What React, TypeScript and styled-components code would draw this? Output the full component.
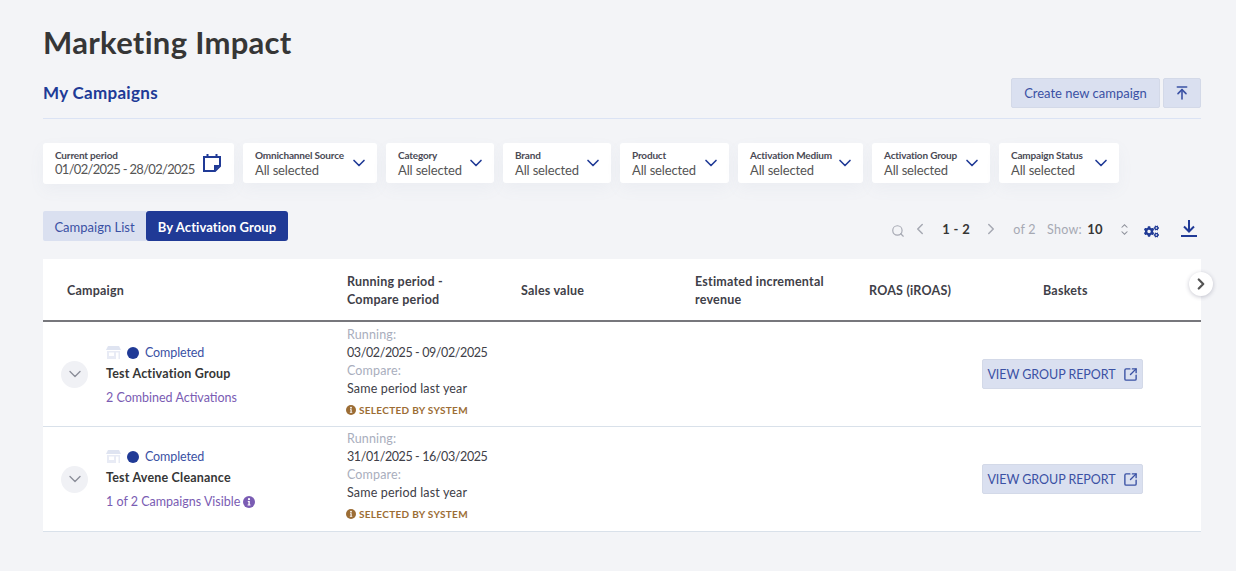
import React from "react";
import styled, { createGlobalStyle } from "styled-components";
import {
  ArrowUpToLine,
  ChevronDown,
  ChevronLeft,
  ChevronRight,
  Search,
  SquareArrowOutUpRight,
} from "lucide-react";
import { FaCogs } from "react-icons/fa";

const Global = createGlobalStyle`
  html, body {
    margin: 0;
    background: #f3f4f7;
    font-family: "Lato", "Open Sans", sans-serif;
    color: #363636;
  }
  * { box-sizing: border-box; }
`;

const Page = styled.div`
  width: 1236px;
  height: 571px;
  padding: 25px 35px 0 43px;
  overflow: hidden;
`;

const Title = styled.h1`
  margin: 0;
  font-size: 31px;
  line-height: 34px;
  font-weight: 700;
  letter-spacing: 0.3px;
  color: #363636;
`;

const SectionBar = styled.div`
  height: 60px;
  padding-top: 19px;
  display: flex;
  justify-content: space-between;
  align-items: flex-start;
  border-bottom: 1px solid #dbe3f4;
`;

const SectionTitle = styled.h2`
  margin: 5px 0 0;
  font-size: 17px;
  line-height: 20px;
  font-weight: 700;
  letter-spacing: 0.3px;
  color: #203a96;
`;

const Actions = styled.div`
  display: flex;
  gap: 3px;
`;

const SoftButton = styled.button<{ $square?: boolean }>`
  height: 30px;
  width: ${(p) => (p.$square ? "38px" : "149px")};
  padding: 0;
  display: flex;
  align-items: center;
  justify-content: center;
  background: #dae0f0;
  border: 1px solid #d3d9e8;
  border-radius: 2px;
  font: inherit;
  font-size: 13px;
  color: #3a51a4;
`;

const Filters = styled.div`
  margin-top: 24px;
  display: flex;
  gap: 9px;
  align-items: flex-start;
`;

const FilterBox = styled.div`
  width: ${(p: { $w: number; $period?: boolean }) => p.$w}px;
  height: ${(p) => (p.$period ? 41 : 40)}px;
  padding: ${(p) => (p.$period ? "4px 12px 6px" : "5px 12px")};
  display: flex;
  align-items: center;
  justify-content: space-between;
  background: #fff;
  border-radius: 3px;
  box-shadow: 0 6px 16px rgba(120, 130, 170, 0.06);
`;

const FilterText = styled.div`
  display: flex;
  flex-direction: column;
  white-space: nowrap;
`;

const FilterLabel = styled.span`
  font-size: 10px;
  line-height: 13px;
  font-weight: 700;
  letter-spacing: -0.18px;
  color: #4a4a55;
`;

const FilterValue = styled.span`
  margin-top: 1px;
  font-size: 13px;
  line-height: 15px;
  letter-spacing: -0.15px;
  color: #555;
`;

const PeriodValue = styled(FilterValue)`
  margin-top: 0;
  letter-spacing: -0.7px;
`;

const Caret = styled(ChevronDown)`
  flex: none;
  width: 20px;
  height: 20px;
  margin-right: -4px;
  color: #203a96;
`;

const ToolRow = styled.div`
  margin-top: 27px;
  height: 30px;
  display: flex;
  justify-content: space-between;
  align-items: center;
`;

const Tabs = styled.div`
  display: flex;
`;

const Tab = styled.div<{ $active?: boolean }>`
  height: 30px;
  padding-top: 1px;
  width: ${(p) => (p.$active ? "142px" : "103px")};
  display: flex;
  align-items: center;
  justify-content: center;
  border-radius: ${(p) => (p.$active ? "3px" : "2px 0 0 2px")};
  font-size: 13px;
  letter-spacing: ${(p) => (p.$active ? "0.1px" : "0")};
  font-weight: ${(p) => (p.$active ? 700 : 400)};
  background: ${(p) => (p.$active ? "#203a96" : "#dae0f0")};
  color: ${(p) => (p.$active ? "#fff" : "#3a51a4")};
`;

const Pager = styled.div`
  display: flex;
  align-items: center;
  height: 30px;
  padding-top: 6px;
  margin-right: 4px;
  font-size: 12.5px;
  letter-spacing: 0.3px;
  color: #a6a9b3;
`;

const PagerBold = styled.span<{ $w: number; $ml: number }>`
  width: ${(p) => p.$w}px;
  margin-left: ${(p) => p.$ml}px;
  text-align: center;
  font-size: 13px;
  font-weight: 700;
  color: #363636;
`;

const PagerText = styled.span<{ $ml: number }>`
  margin-left: ${(p) => p.$ml}px;
`;

const Table = styled.div`
  position: relative;
  margin-top: 18px;
  width: 1158px;
`;

const HeadRow = styled.div`
  height: 63px;
  padding-top: 2px;
  display: grid;
  grid-template-columns: 304px repeat(4, 174px) 1fr;
  align-items: center;
  background: #fff;
  border-bottom: 2px solid #77777c;
  font-size: 12.5px;
  line-height: 18px;
  font-weight: 700;
  letter-spacing: 0.22px;
  color: #404048;
`;

const HeadCell = styled.div<{ $first?: boolean }>`
  padding-left: ${(p) => (p.$first ? "24px" : "0")};
  padding-right: 20px;
`;

const ScrollButton = styled.div`
  position: absolute;
  top: 13px;
  right: -12px;
  width: 24px;
  height: 24px;
  display: flex;
  align-items: center;
  justify-content: center;
  background: #fff;
  border-radius: 50%;
  color: #555;
  box-shadow: 0 1px 4px rgba(70, 70, 100, 0.3);
`;

const CampaignCell = styled.div`
  display: flex;
  align-items: center;
  padding-left: 18px;
  gap: 18px;
`;

const Expand = styled.div`
  width: 27px;
  height: 27px;
  flex: none;
  display: flex;
  align-items: center;
  justify-content: center;
  background: #f0f1f5;
  border-radius: 50%;
  color: #8b8e99;
`;

const CampaignInfo = styled.div`
  display: flex;
  flex-direction: column;
  padding-top: 2px;
`;

const StatusLine = styled.div`
  display: flex;
  align-items: center;
  height: 20px;
  font-size: 12.5px;
  letter-spacing: -0.1px;
  color: #3a51a4;
`;

const StatusDot = styled.span`
  width: 12px;
  height: 12px;
  margin: 0 6px 0 6px;
  background: #203a96;
  border-radius: 50%;
`;

const CampaignName = styled.div`
  margin-top: 1px;
  font-size: 12.5px;
  line-height: 20px;
  font-weight: 700;
  letter-spacing: 0.2px;
  color: #363636;
`;

const CampaignMeta = styled.div`
  margin-top: 4px;
  display: flex;
  align-items: center;
  gap: 3px;
  font-size: 12.5px;
  line-height: 20px;
  color: #7a5cb3;
`;

const PeriodCell = styled.div`
  margin-top: -3px;
  font-size: 12.5px;
  line-height: 18px;
  letter-spacing: 0.15px;
  white-space: nowrap;
  color: #404048;
`;

const PeriodLabel = styled.div`
  color: #a9aebd;
`;

const PeriodDates = styled.div`
  letter-spacing: -0.4px;
`;

const SystemNote = styled.div`
  margin-top: 3px;
  margin-left: -1px;
  display: flex;
  align-items: center;
  gap: 3px;
  font-size: 10px;
  font-weight: 700;
  letter-spacing: 0.3px;
  color: #9c6d35;
`;

const Row = styled.div`
  height: 105px;
  display: grid;
  grid-template-columns: 304px 174px 1fr;
  align-items: center;
  background: #fff;
  border-bottom: 1px solid #d9e1ea;

  & + & ${CampaignInfo} {
    margin-bottom: 2px;
  }
  & + & ${PeriodCell} {
    margin-bottom: 2px;
  }
`;

const ReportCell = styled.div`
  display: flex;
  justify-content: flex-end;
  padding-right: 58px;
`;

const ReportButton = styled.button`
  width: 161px;
  height: 30px;
  display: flex;
  align-items: center;
  justify-content: center;
  gap: 7px;
  padding: 0;
  background: #dae0f0;
  border: 1px solid #d3d9e8;
  border-radius: 2px;
  font: inherit;
  font-size: 12.5px;
  letter-spacing: -0.05px;
  color: #3a51a4;
  white-space: nowrap;
`;

const filters = [
  { label: "Omnichannel Source", w: 134 },
  { label: "Category", w: 108 },
  { label: "Brand", w: 108 },
  { label: "Product", w: 109 },
  { label: "Activation Medium", w: 125 },
  { label: "Activation Group", w: 118 },
  { label: "Campaign Status", w: 120 },
];

const rows = [
  {
    name: "Test Activation Group",
    meta: "2 Combined Activations",
    running: "03/02/2025 - 09/02/2025",
    info: false,
  },
  {
    name: "Test Avene Cleanance",
    meta: "1 of 2 Campaigns Visible",
    running: "31/01/2025 - 16/03/2025",
    info: true,
  },
];

function CalendarIcon() {
  return (
    <svg width="20" height="20" viewBox="0 0 20 20" fill="none" style={{ flex: "none" }}>
      <path d="M2 4h16v9l-5 5H2z" stroke="#203a96" strokeWidth="2" />
      <path d="M5.5 1v3M14.5 1v3" stroke="#203a96" strokeWidth="2" />
      <path d="M12 18v-6h6z" fill="#203a96" />
    </svg>
  );
}

function StoreIcon() {
  return (
    <svg width="15" height="13" viewBox="0 0 15 13">
      <path d="M2 0h11l2 4H0z" fill="#dfe4f1" />
      <path d="M1 5h13v8H1z" fill="#e8ebf5" />
      <path d="M3 6.5h5v3.5H3z" fill="#fff" />
      <path d="M10 6.5h2.5V13H10z" fill="#fff" />
    </svg>
  );
}

function InfoDot({ color, size }: { color: string; size: number }) {
  return (
    <svg width={size} height={size} viewBox="0 0 12 12" style={{ flex: "none" }}>
      <circle cx="6" cy="6" r="6" fill={color} />
      <circle cx="6" cy="3.2" r="1.1" fill="#fff" />
      <path d="M4.8 5h2v3.4h.7v1H4.6v-1h.8V6h-.6z" fill="#fff" />
    </svg>
  );
}

function SortIcon() {
  return (
    <svg width="7" height="11" viewBox="0 0 7 11" style={{ marginLeft: 18 }}>
      <path d="M3.5 0L7 3.5H5.6L3.5 1.6 1.4 3.5H0z" fill="#8f929c" />
      <path d="M3.5 11L0 7.5h1.4l2.1 1.9 2.1-1.9H7z" fill="#8f929c" />
    </svg>
  );
}

function DownloadIcon() {
  return (
    <svg width="16" height="17" viewBox="0 0 16 17" fill="none" style={{ marginLeft: 22, marginTop: -1 }}>
      <path d="M8 0v11M3 6.5l5 5 5-5" stroke="#203a96" strokeWidth="2" />
      <path d="M0 16h16" stroke="#203a96" strokeWidth="2" />
    </svg>
  );
}

export default function App() {
  return (
    <Page>
      <Global />
      <Title>Marketing Impact</Title>
      <SectionBar>
        <SectionTitle>My Campaigns</SectionTitle>
        <Actions>
          <SoftButton>Create new campaign</SoftButton>
          <SoftButton $square>
            <ArrowUpToLine size={16} strokeWidth={2.4} />
          </SoftButton>
        </Actions>
      </SectionBar>

      <Filters>
        <FilterBox $w={191} $period>
          <FilterText>
            <FilterLabel>Current period</FilterLabel>
            <PeriodValue>01/02/2025 - 28/02/2025</PeriodValue>
          </FilterText>
          <CalendarIcon />
        </FilterBox>
        {filters.map((f) => (
          <FilterBox key={f.label} $w={f.w}>
            <FilterText>
              <FilterLabel>{f.label}</FilterLabel>
              <FilterValue>All selected</FilterValue>
            </FilterText>
            <Caret />
          </FilterBox>
        ))}
      </Filters>

      <ToolRow>
        <Tabs>
          <Tab>Campaign List</Tab>
          <Tab $active>By Activation Group</Tab>
        </Tabs>
        <Pager>
          <Search size={14} style={{ marginTop: 4 }} />
          <ChevronLeft size={18} style={{ marginLeft: 6 }} />
          <PagerBold $w={30} $ml={12}>
            1 - 2
          </PagerBold>
          <ChevronRight size={18} style={{ marginLeft: 11 }} />
          <PagerText $ml={13}>of 2</PagerText>
          <PagerText $ml={11}>Show:</PagerText>
          <PagerBold $w={16} $ml={5}>
            10
          </PagerBold>
          <SortIcon />
          <FaCogs size={15} color="#203a96" style={{ marginLeft: 16, marginTop: 4 }} />
          <DownloadIcon />
        </Pager>
      </ToolRow>

      <Table>
        <HeadRow>
          <HeadCell $first>Campaign</HeadCell>
          <HeadCell>
            Running period -<br />
            Compare period
          </HeadCell>
          <HeadCell>Sales value</HeadCell>
          <HeadCell>Estimated incremental revenue</HeadCell>
          <HeadCell>ROAS (iROAS)</HeadCell>
          <HeadCell>Baskets</HeadCell>
        </HeadRow>
        <ScrollButton>
          <ChevronRight size={18} strokeWidth={3} />
        </ScrollButton>
        {rows.map((r) => (
          <Row key={r.name}>
            <CampaignCell>
              <Expand>
                <ChevronDown size={20} strokeWidth={1.6} />
              </Expand>
              <CampaignInfo>
                <StatusLine>
                  <StoreIcon />
                  <StatusDot />
                  Completed
                </StatusLine>
                <CampaignName>{r.name}</CampaignName>
                <CampaignMeta>
                  {r.meta}
                  {r.info && <InfoDot color="#7a5cb3" size={12} />}
                </CampaignMeta>
              </CampaignInfo>
            </CampaignCell>
            <PeriodCell>
              <PeriodLabel>Running:</PeriodLabel>
              <PeriodDates>{r.running}</PeriodDates>
              <PeriodLabel>Compare:</PeriodLabel>
              <div>Same period last year</div>
              <SystemNote>
                <InfoDot color="#9c6d35" size={10} />
                SELECTED BY SYSTEM
              </SystemNote>
            </PeriodCell>
            <ReportCell>
              <ReportButton>
                VIEW GROUP REPORT
                <SquareArrowOutUpRight size={15} strokeWidth={2.2} />
              </ReportButton>
            </ReportCell>
          </Row>
        ))}
      </Table>
    </Page>
  );
}
